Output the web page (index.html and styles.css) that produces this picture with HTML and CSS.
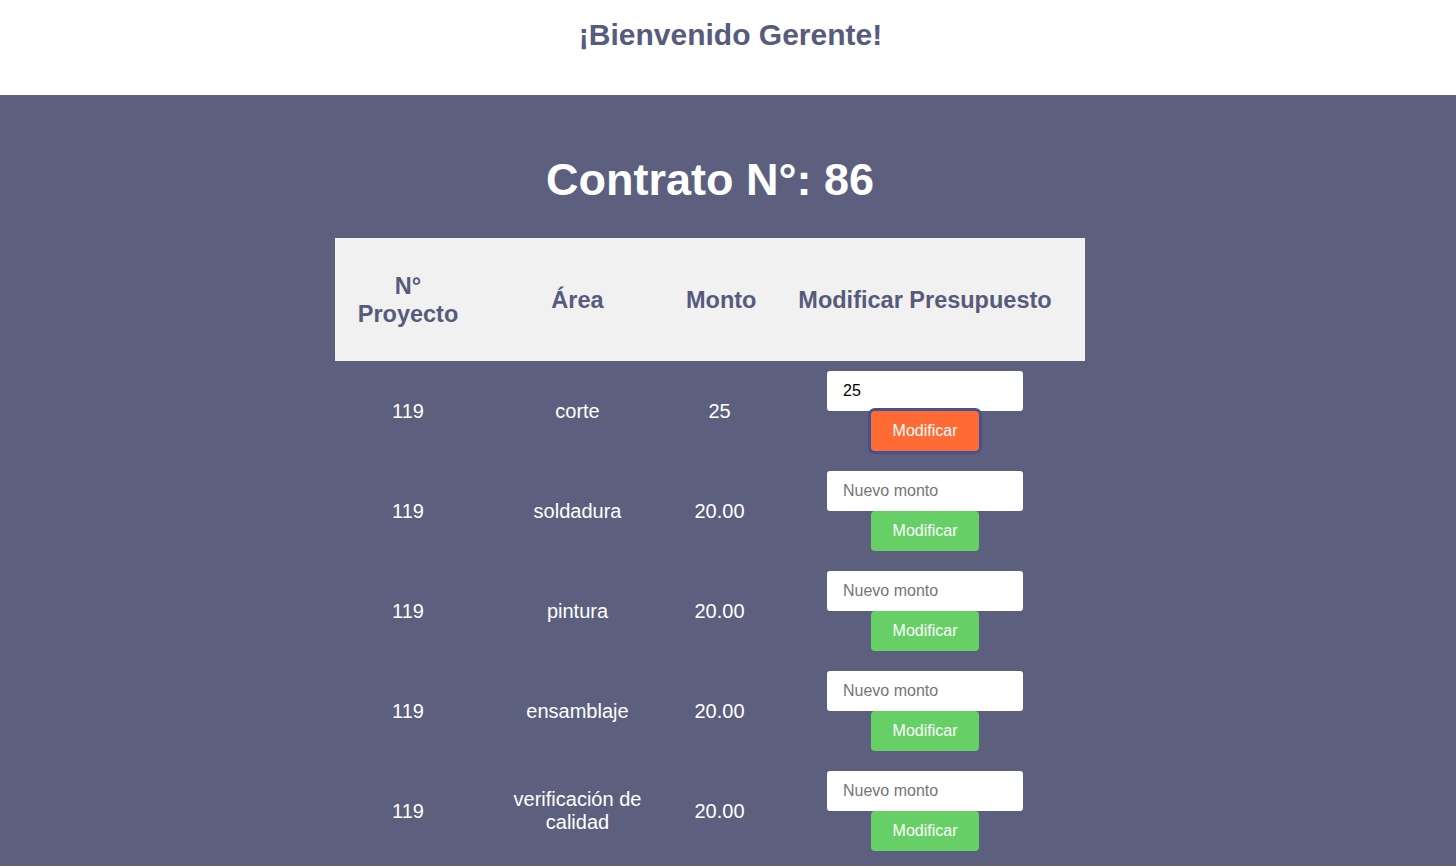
FILE: index.html
```html
<!DOCTYPE html>
<html lang="es">
<head>
<meta charset="utf-8">
<title>Gerente</title>
<link rel="stylesheet" href="styles.css">
</head>
<body>
<header class="top">
  <h1 class="welcome">¡Bienvenido Gerente!</h1>
</header>
<main class="panel">
  <div class="inner">
    <h2 class="title">Contrato N°: 86</h2>
    <table class="budget">
      <colgroup>
        <col class="c1"><col class="c2"><col class="c3"><col class="c4">
      </colgroup>
      <thead>
        <tr><th>N° Proyecto</th><th>Área</th><th>Monto</th><th>Modificar Presupuesto</th></tr>
      </thead>
      <tbody>
        <tr><td>119</td><td>corte</td><td>25</td><td><div class="edit"><input class="amount" type="text" value="25" placeholder="Nuevo monto"><button class="btn btn-active">Modificar</button></div></td></tr>
        <tr><td>119</td><td>soldadura</td><td>20.00</td><td><div class="edit"><input class="amount" type="text" placeholder="Nuevo monto"><button class="btn">Modificar</button></div></td></tr>
        <tr><td>119</td><td>pintura</td><td>20.00</td><td><div class="edit"><input class="amount" type="text" placeholder="Nuevo monto"><button class="btn">Modificar</button></div></td></tr>
        <tr><td>119</td><td>ensamblaje</td><td>20.00</td><td><div class="edit"><input class="amount" type="text" placeholder="Nuevo monto"><button class="btn">Modificar</button></div></td></tr>
        <tr><td>119</td><td>verificación de calidad</td><td>20.00</td><td><div class="edit"><input class="amount" type="text" placeholder="Nuevo monto"><button class="btn">Modificar</button></div></td></tr>
      </tbody>
    </table>
  </div>
</main>
</body>
</html>
```

FILE: styles.css
```css
html, body {
  margin: 0;
  padding: 0;
  background: #ffffff;
  font-family: "Liberation Sans", Arial, sans-serif;
}

.top {
  height: 95px;
  display: flex;
  justify-content: center;
  align-items: flex-start;
}

.welcome {
  margin: 18px 0 0 5px;
  font-size: 30px;
  line-height: 34px;
  font-weight: bold;
  color: #575b7c;
}

.panel {
  background: #5c5f7e;
  height: 771px;
}

.inner {
  display: flex;
  flex-direction: column;
  align-items: center;
  padding: 0 36px 0 0;
}

.title {
  margin: 59px 0 32px;
  font-size: 45px;
  line-height: 52px;
  font-weight: bold;
  color: #ffffff;
}

.budget {
  border-collapse: collapse;
  table-layout: fixed;
  width: 750px;
}

.c1 { width: 146px; }
.c2 { width: 193px; }
.c3 { width: 91px; }
.c4 { width: 320px; }

.budget th {
  background: #f1f1f1;
  color: #575b7c;
  font-size: 23.5px;
  line-height: 28px;
  font-weight: bold;
  height: 123px;
  padding: 0 12px;
  text-align: center;
}

.budget td {
  color: #ffffff;
  font-size: 20px;
  line-height: 23px;
  text-align: center;
  padding: 10px 12px;
  height: 80px;
}

.edit {
  display: flex;
  flex-direction: column;
  align-items: center;
}

.amount {
  box-sizing: border-box;
  width: 196px;
  height: 40px;
  border: none;
  border-radius: 3px;
  padding: 0 16px;
  font-family: "Liberation Sans", Arial, sans-serif;
  font-size: 16px;
  color: #000000;
  background: #ffffff;
  outline: none;
}

.amount::placeholder {
  color: #757575;
}

.btn {
  box-sizing: border-box;
  width: 108px;
  height: 40px;
  border: none;
  border-radius: 4px;
  background: #66d066;
  color: #ffffff;
  font-family: "Liberation Sans", Arial, sans-serif;
  font-size: 16px;
}

.btn-active {
  background: #ff6b35;
  box-shadow: 0 0 0 3px #46518d;
}
```
